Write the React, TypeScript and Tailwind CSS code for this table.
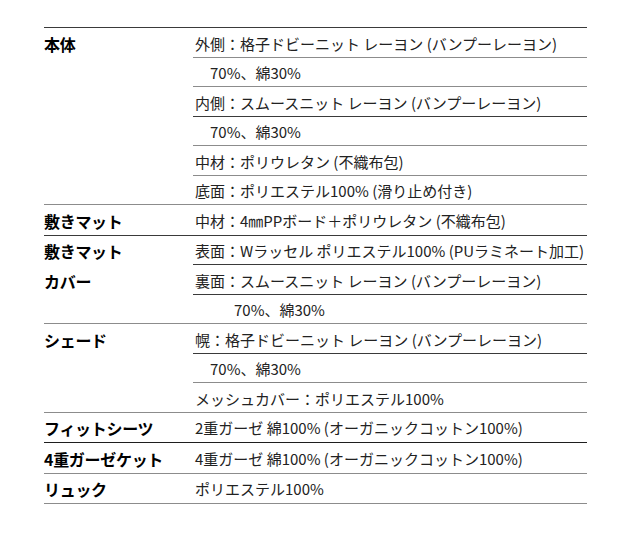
import React from 'react';

type Line = { text: string; indent?: string; line?: string };
type Group = { labels: string[]; line: string; rows: Line[] };

const DARK = 'border-[#3a3a3a]';
const GRAY = 'border-[#8c8c8c]';

const groups: Group[] = [
  {
    labels: ['本体'],
    line: DARK,
    rows: [
      { text: '外側：格子ドビーニット レーヨン (バンプーレーヨン)', line: DARK },
      { text: '70%、綿30%', indent: 'pl-[17px]', line: GRAY },
      { text: '内側：スムースニット レーヨン (バンプーレーヨン)', line: GRAY },
      { text: '70%、綿30%', indent: 'pl-[17px]', line: DARK },
      { text: '中材：ポリウレタン (不織布包)', line: GRAY },
      { text: '底面：ポリエステル100% (滑り止め付き)', line: GRAY },
    ],
  },
  {
    labels: ['敷きマット'],
    line: GRAY,
    rows: [{ text: '中材：4㎜PPボード＋ポリウレタン (不織布包)', line: GRAY }],
  },
  {
    labels: ['敷きマット', 'カバー'],
    line: DARK,
    rows: [
      { text: '表面：Wラッセル ポリエステル100% (PUラミネート加工)', line: DARK },
      { text: '裏面：スムースニット レーヨン (バンプーレーヨン)', line: DARK },
      { text: '70%、綿30%', indent: 'pl-[41px]', line: DARK },
    ],
  },
  {
    labels: ['シェード'],
    line: GRAY,
    rows: [
      { text: '幌：格子ドビーニット レーヨン (バンプーレーヨン)', line: GRAY },
      { text: '70%、綿30%', indent: 'pl-[17px]', line: DARK },
      { text: 'メッシュカバー：ポリエステル100%', line: GRAY },
    ],
  },
  {
    labels: ['フィットシーツ'],
    line: GRAY,
    rows: [{ text: '2重ガーゼ 綿100% (オーガニックコットン100%)', line: GRAY }],
  },
  {
    labels: ['4重ガーゼケット'],
    line: 'border-[#1e1e1e]',
    rows: [{ text: '4重ガーゼ 綿100% (オーガニックコットン100%)', line: 'border-[#1e1e1e]' }],
  },
  {
    labels: ['リュック'],
    line: GRAY,
    rows: [{ text: 'ポリエステル100%', line: GRAY }],
  },
];

export default function App() {
  return (
    <div
      className="w-[640px] h-[547px] bg-white pt-[27px] pl-[44px]"
      style={{ fontFamily: '"Noto Sans CJK JP", "Noto Sans", sans-serif' }}
    >
      <div className={`w-[543px] border-b ${GRAY}`}>
        {groups.map((g, gi) => (
          <div key={gi} className="flex">
            <div className={`w-[149px] shrink-0 border-t ${g.line}`}>
              {g.labels.map((l, li) => (
                <div
                  key={li}
                  className="h-[29.5px] flex items-center pt-[2px] text-[16px] font-bold text-black leading-none tracking-[-0.3px]"
                >
                  {l}
                </div>
              ))}
            </div>
            <div className="flex-1 flex flex-col">
              {g.rows.map((r, ri) => (
                <div
                  key={ri}
                  className={`h-[29.5px] flex items-center pt-[2px] border-t ${r.line} ${r.indent ?? 'pl-[2px]'} text-[15px] text-[#222] leading-none whitespace-nowrap`}
                >
                  {r.text}
                </div>
              ))}
            </div>
          </div>
        ))}
      </div>
    </div>
  );
}
